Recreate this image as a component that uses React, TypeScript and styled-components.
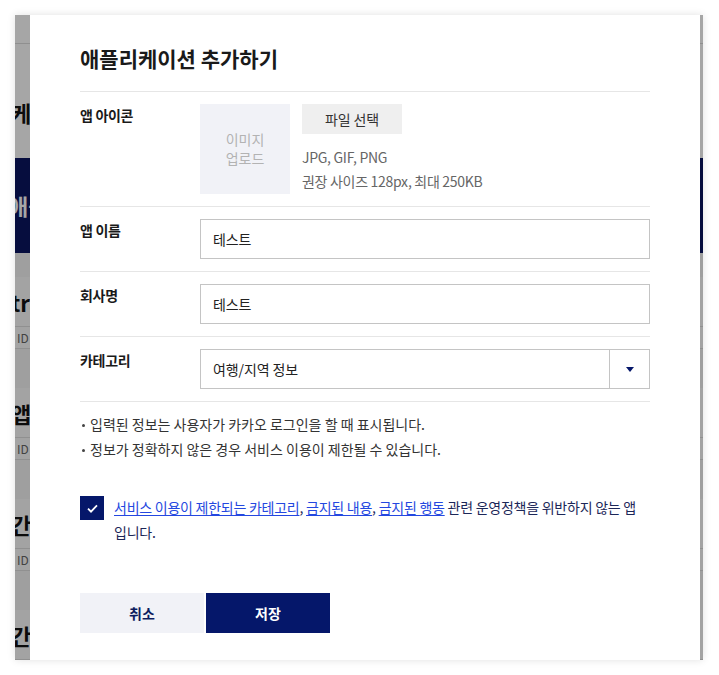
import React from "react";
import styled, { createGlobalStyle } from "styled-components";

const NAVY = "#05176a";

const GlobalStyle = createGlobalStyle`
  html, body { margin: 0; padding: 0; background: #ffffff; }
  body {
    font-family: "Noto Sans CJK KR", "Noto Sans", sans-serif;
    color: #222;
    -webkit-font-smoothing: antialiased;
  }
  * { box-sizing: border-box; }
`;

const Stage = styled.div`
  width: 719px;
  height: 675px;
  padding: 15px 0 0 15px;
`;

const Frame = styled.div`
  position: relative;
  width: 688px;
  height: 645px;
  overflow: hidden;
  box-shadow: 0 0 8px rgba(0, 0, 0, 0.12);
`;

/* ---------- page behind the dialog ---------- */
const BgPage = styled.div`
  height: 100%;
  background: #f4f4f4;
  display: flex;
  flex-direction: column;
`;

const BgTopBar = styled.div`
  height: 29px;
  flex: none;
  background: #fff;
  border-bottom: 1px solid #dcdcdc;
`;

const BgHeading = styled.div`
  height: 114px;
  flex: none;
  background: #fff;
  padding-top: 53px;
  font-size: 22px;
  font-weight: 700;
  line-height: 30px;
  color: #111;
  white-space: nowrap;
  margin-left: -4px;
`;

const BgBanner = styled.div`
  height: 95px;
  flex: none;
  background: #0a1560;
  color: #fff;
  font-size: 22px;
  font-weight: 700;
  line-height: 95px;
  white-space: nowrap;
  margin-left: -7px;
`;

const BgList = styled.div`
  display: flex;
  flex-direction: column;
  gap: 39px;
  padding-top: 24px;
`;

const BgCard = styled.div`
  background: #fbfbfb;
`;

const BgCardTitle = styled.div`
  height: 50px;
  line-height: 50px;
  font-size: 22px;
  font-weight: 700;
  color: #111;
  white-space: nowrap;
  border-bottom: 1px solid #dedede;
  margin-left: -4px;
`;

const BgCardMeta = styled.div`
  height: 22px;
  line-height: 21px;
  font-size: 12px;
  color: #666;
  padding-left: 2px;
  border-bottom: 1px solid #dedede;
`;

const Overlay = styled.div`
  position: absolute;
  inset: 0;
  background: rgba(0, 0, 0, 0.35);
`;

/* ---------- dialog ---------- */
const Modal = styled.div`
  position: absolute;
  top: 0;
  bottom: 0;
  left: 15px;
  width: 670px;
  background: #fff;
  padding: 28px 50px 27px;
  display: flex;
  flex-direction: column;
  letter-spacing: -0.1px;
`;

const Title = styled.h1`
  margin: 0 0 18px;
  font-size: 21px;
  line-height: 30px;
  font-weight: 700;
  color: #1a1a1a;
  letter-spacing: 0;
`;

const Form = styled.div`
  display: flex;
  flex-direction: column;
`;

const FormRow = styled.div`
  display: grid;
  grid-template-columns: 120px 1fr;
  padding: 12px 0;
  border-top: 1px solid #e6e6e6;
  &:last-child {
    border-bottom: 1px solid #e6e6e6;
  }
`;

const Label = styled.div`
  font-size: 14px;
  line-height: 20px;
  font-weight: 700;
  color: #1a1a1a;
  letter-spacing: -0.3px;
  padding-top: 1px;
`;

const IconField = styled.div`
  display: flex;
  gap: 12px;
`;

const UploadBox = styled.div`
  width: 90px;
  height: 90px;
  background: #f1f2f7;
  color: #b3b3b3;
  font-size: 14px;
  line-height: 19px;
  display: flex;
  align-items: center;
  justify-content: center;
  text-align: center;
`;

const FileInfo = styled.div`
  display: flex;
  flex-direction: column;
  align-items: flex-start;
`;

const FileButton = styled.button`
  width: 100px;
  height: 30px;
  border: none;
  background: #efefef;
  font-family: inherit;
  font-size: 14px;
  color: #333;
  letter-spacing: -0.1px;
  padding: 0;
  cursor: pointer;
`;

const Hints = styled.div`
  margin-top: 11px;
  font-size: 14px;
  line-height: 24px;
  color: #666;
  letter-spacing: -0.3px;
`;

const TextInput = styled.input`
  width: 100%;
  height: 40px;
  border: 1px solid #c4c4c4;
  padding: 0 12px;
  font-family: inherit;
  font-size: 14px;
  color: #222;
  letter-spacing: -0.1px;
  outline: none;
`;

const SelectBox = styled.div`
  display: flex;
  height: 40px;
  border: 1px solid #c4c4c4;
`;

const SelectValue = styled.div`
  flex: 1;
  padding: 0 12px;
  font-size: 14px;
  line-height: 38px;
  color: #222;
`;

const SelectArrow = styled.div`
  width: 40px;
  border-left: 1px solid #c4c4c4;
  display: flex;
  align-items: center;
  justify-content: center;
`;

const Notes = styled.ul`
  list-style: none;
  margin: 10px 0 0;
  padding: 0;
`;

const Note = styled.li`
  position: relative;
  padding-left: 10px;
  font-size: 14px;
  line-height: 25px;
  color: #333;
  letter-spacing: 0;
  &::before {
    content: "";
    position: absolute;
    left: 2px;
    top: 12px;
    width: 3px;
    height: 3px;
    border-radius: 50%;
    background: #444;
  }
`;

const Agreement = styled.label`
  margin-top: 33px;
  display: flex;
  gap: 10px;
  align-items: flex-start;
`;

const CheckBox = styled.span`
  flex: none;
  width: 24px;
  height: 24px;
  margin-top: 1px;
  background: ${NAVY};
  display: flex;
  align-items: center;
  justify-content: center;
`;

const AgreeText = styled.span`
  font-size: 14px;
  line-height: 25px;
  color: #1c2758;
  letter-spacing: -0.25px;
  word-break: keep-all;
`;

const PolicyLink = styled.a`
  color: #2447e0;
  text-decoration: underline;
  text-underline-offset: 2px;
`;

const Actions = styled.div`
  margin-top: 48px;
  display: flex;
  gap: 2px;
`;

const ActionButton = styled.button<{ $primary?: boolean }>`
  width: 124px;
  height: 40px;
  border: none;
  padding: 0;
  font-family: inherit;
  font-size: 14px;
  font-weight: 700;
  cursor: pointer;
  background: ${(p) => (p.$primary ? NAVY : "#f1f2f7")};
  color: ${(p) => (p.$primary ? "#ffffff" : "#0c1c5e")};
`;

const bgCards = ["tra", "앱", "간", "간"];

export default function App() {
  return (
    <>
      <GlobalStyle />
      <Stage>
        <Frame>
          <BgPage>
            <BgTopBar />
            <BgHeading>케이션 관리</BgHeading>
            <BgBanner>애플리케이션</BgBanner>
            <BgList>
              {bgCards.map((t, i) => (
                <BgCard key={i}>
                  <BgCardTitle>{t}</BgCardTitle>
                  <BgCardMeta>ID</BgCardMeta>
                </BgCard>
              ))}
            </BgList>
          </BgPage>
          <Overlay />
          <Modal>
            <Title>애플리케이션 추가하기</Title>
            <Form>
              <FormRow>
                <Label>앱 아이콘</Label>
                <IconField>
                  <UploadBox>
                    이미지
                    <br />
                    업로드
                  </UploadBox>
                  <FileInfo>
                    <FileButton type="button">파일 선택</FileButton>
                    <Hints>
                      JPG, GIF, PNG
                      <br />
                      권장 사이즈 128px, 최대 250KB
                    </Hints>
                  </FileInfo>
                </IconField>
              </FormRow>
              <FormRow>
                <Label>앱 이름</Label>
                <TextInput defaultValue="테스트" />
              </FormRow>
              <FormRow>
                <Label>회사명</Label>
                <TextInput defaultValue="테스트" />
              </FormRow>
              <FormRow>
                <Label>카테고리</Label>
                <SelectBox>
                  <SelectValue>여행/지역 정보</SelectValue>
                  <SelectArrow>
                    <svg width="8" height="5" viewBox="0 0 8 5">
                      <path d="M0 0h8L4 5z" fill={NAVY} />
                    </svg>
                  </SelectArrow>
                </SelectBox>
              </FormRow>
            </Form>
            <Notes>
              <Note>입력된 정보는 사용자가 카카오 로그인을 할 때 표시됩니다.</Note>
              <Note>정보가 정확하지 않은 경우 서비스 이용이 제한될 수 있습니다.</Note>
            </Notes>
            <Agreement>
              <CheckBox role="checkbox" aria-checked="true">
                <svg width="11" height="9" viewBox="0 0 11 9">
                  <path d="M1 4.6l3 3L10 1.4" fill="none" stroke="#fff" strokeWidth="1.8" />
                </svg>
              </CheckBox>
              <AgreeText>
                <PolicyLink href="#">서비스 이용이 제한되는 카테고리</PolicyLink>,{" "}
                <PolicyLink href="#">금지된 내용</PolicyLink>,{" "}
                <PolicyLink href="#">금지된 행동</PolicyLink> 관련 운영정책을 위반하지 않는 앱
                입니다.
              </AgreeText>
            </Agreement>
            <Actions>
              <ActionButton type="button">취소</ActionButton>
              <ActionButton type="button" $primary>
                저장
              </ActionButton>
            </Actions>
          </Modal>
        </Frame>
      </Stage>
    </>
  );
}
